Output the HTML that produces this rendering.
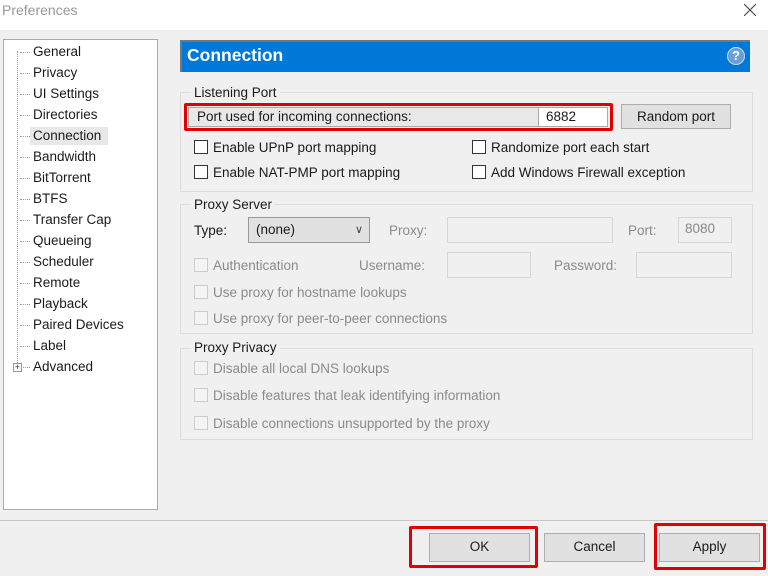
<!DOCTYPE html>
<html><head><meta charset="utf-8"><style>
*{margin:0;padding:0;box-sizing:border-box}
body{width:768px;height:576px;background:#f0f0f0;font-family:"Liberation Sans",sans-serif;font-size:13.5px;color:#1a1a1a;position:relative;overflow:hidden}
.a{position:absolute;white-space:nowrap}
.g{color:#8a8a8a}
.cb{position:absolute;width:14px;height:14px;border:1px solid #333;background:#fff}
.cbd{border-color:#ccc;background:#f4f4f4}
.grp{position:absolute;border:1px solid #dcdcdc}
.lbl{position:absolute;background:#f0f0f0;padding:0 3px}
.inp{position:absolute;border:1px solid #d6d6d6;background:#f0f0f0}
.btn{position:absolute;border:1px solid #adadad;background:#e1e1e1;text-align:center;line-height:26px}
.red{position:absolute;border:3px solid #e00000;border-radius:2px}
.tree .a{left:33px}
.dot{position:absolute;left:20px;width:10px;border-top:1px dotted #999}
</style></head><body>
<div class="a" style="left:0;top:0;width:768px;height:30px;background:#fff"></div>
<div class="a g" style="left:2px;top:2px;font-size:14px;color:#999">Preferences</div>
<svg class="a" style="left:744px;top:4px" width="12" height="12"><path d="M0 0L12 12M12 0L0 12" stroke="#555" stroke-width="1.2"/></svg>

<div class="a tree" style="left:3px;top:39px;width:155px;height:471px;background:#fff;border:1px solid #aaa"></div>
<div class="a" style="left:17px;top:51px;height:318px;border-left:1px dotted #999"></div>
<div class="a" style="left:30px;top:127px;width:78px;height:18px;background:#e8e8e8"></div>
<div class="tree">
<div class="a" style="top:44px">General</div>
<div class="a" style="top:65px">Privacy</div>
<div class="a" style="top:86px">UI Settings</div>
<div class="a" style="top:107px">Directories</div>
<div class="a" style="top:128px">Connection</div>
<div class="a" style="top:149px">Bandwidth</div>
<div class="a" style="top:170px">BitTorrent</div>
<div class="a" style="top:191px">BTFS</div>
<div class="a" style="top:212px">Transfer Cap</div>
<div class="a" style="top:233px">Queueing</div>
<div class="a" style="top:254px">Scheduler</div>
<div class="a" style="top:275px">Remote</div>
<div class="a" style="top:296px">Playback</div>
<div class="a" style="top:317px">Paired Devices</div>
<div class="a" style="top:338px">Label</div>
<div class="a" style="top:359px">Advanced</div>
</div>
<div class="dot" style="top:52px"></div><div class="dot" style="top:73px"></div><div class="dot" style="top:94px"></div><div class="dot" style="top:115px"></div><div class="dot" style="top:136px"></div><div class="dot" style="top:157px"></div><div class="dot" style="top:178px"></div><div class="dot" style="top:199px"></div><div class="dot" style="top:220px"></div><div class="dot" style="top:241px"></div><div class="dot" style="top:262px"></div><div class="dot" style="top:283px"></div><div class="dot" style="top:304px"></div><div class="dot" style="top:325px"></div><div class="dot" style="top:346px"></div><div class="dot" style="top:367px"></div>
<div class="a" style="left:13px;top:363px;width:9px;height:9px;border:1px solid #999;background:#fff;font-size:9px;line-height:7px;text-align:center;color:#333">+</div>

<div class="a" style="left:180px;top:40px;width:570px;height:32px;background:#0078d7;border-top:2px solid #777;border-left:2px solid #777"></div>
<div class="a" style="left:187px;top:45px;color:#fff;font-size:17.5px;font-weight:bold">Connection</div>
<div class="a" style="left:727px;top:47px;width:18px;height:18px;border-radius:50%;background:#6a9fd6;border:1px solid #c8dcf0;color:#fff;font-size:13px;font-weight:bold;text-align:center;line-height:16px">?</div>

<div class="grp" style="left:180px;top:92px;width:573px;height:100px"></div>
<div class="lbl" style="left:191px;top:85px">Listening Port</div>
<div class="a" style="left:188px;top:107px;width:351px;height:20px;border:1px solid #aaa;background:#e8e8e8"></div>
<div class="a" style="left:197px;top:109px">Port used for incoming connections:</div>
<div class="a" style="left:538px;top:107px;width:70px;height:20px;background:#fff;border:1px solid #aaa;padding-left:7px;line-height:17px">6882</div>
<div class="red" style="left:184px;top:103px;width:429px;height:28px"></div>
<div class="btn" style="left:621px;top:104px;width:110px;height:25px;line-height:24px">Random port</div>
<div class="cb" style="left:194px;top:140px"></div><div class="a" style="left:213px;top:140px">Enable UPnP port mapping</div>
<div class="cb" style="left:194px;top:165px"></div><div class="a" style="left:213px;top:165px">Enable NAT-PMP port mapping</div>
<div class="cb" style="left:472px;top:140px"></div><div class="a" style="left:491px;top:140px">Randomize port each start</div>
<div class="cb" style="left:472px;top:165px"></div><div class="a" style="left:491px;top:165px">Add Windows Firewall exception</div>

<div class="grp" style="left:180px;top:204px;width:573px;height:130px"></div>
<div class="lbl" style="left:191px;top:197px">Proxy Server</div>
<div class="a" style="left:194px;top:223px">Type:</div>
<div class="a" style="left:248px;top:217px;width:122px;height:26px;border:1px solid #999;background:#e1e1e1;padding-left:7px;line-height:24px">(none)<span style="position:absolute;right:6px;top:0;font-size:11px;color:#444">∨</span></div>
<div class="a g" style="left:389px;top:223px">Proxy:</div>
<div class="inp" style="left:447px;top:217px;width:166px;height:26px"></div>
<div class="a g" style="left:628px;top:223px">Port:</div>
<div class="inp" style="left:678px;top:217px;width:54px;height:26px;color:#888;padding-left:6px;line-height:22px">8080</div>
<div class="cb cbd" style="left:194px;top:258px"></div><div class="a g" style="left:213px;top:258px">Authentication</div>
<div class="a g" style="left:359px;top:258px">Username:</div>
<div class="inp" style="left:447px;top:252px;width:84px;height:26px"></div>
<div class="a g" style="left:554px;top:258px">Password:</div>
<div class="inp" style="left:636px;top:252px;width:96px;height:26px"></div>
<div class="cb cbd" style="left:194px;top:285px"></div><div class="a g" style="left:213px;top:285px">Use proxy for hostname lookups</div>
<div class="cb cbd" style="left:194px;top:311px"></div><div class="a g" style="left:213px;top:311px">Use proxy for peer-to-peer connections</div>

<div class="grp" style="left:180px;top:348px;width:573px;height:92px"></div>
<div class="lbl" style="left:191px;top:340px">Proxy Privacy</div>
<div class="cb cbd" style="left:194px;top:361px"></div><div class="a g" style="left:213px;top:361px">Disable all local DNS lookups</div>
<div class="cb cbd" style="left:194px;top:388px"></div><div class="a g" style="left:213px;top:388px">Disable features that leak identifying information</div>
<div class="cb cbd" style="left:194px;top:416px"></div><div class="a g" style="left:213px;top:416px">Disable connections unsupported by the proxy</div>

<div class="a" style="left:0;top:520px;width:768px;border-top:1px solid #c8c8c8"></div>
<div class="btn" style="left:429px;top:533px;width:101px;height:29px">OK</div>
<div class="btn" style="left:544px;top:533px;width:101px;height:29px">Cancel</div>
<div class="btn" style="left:659px;top:533px;width:101px;height:29px">Apply</div>
<div class="red" style="left:409px;top:526px;width:129px;height:42px"></div>
<div class="red" style="left:654px;top:523px;width:112px;height:47px"></div>
</body></html>
